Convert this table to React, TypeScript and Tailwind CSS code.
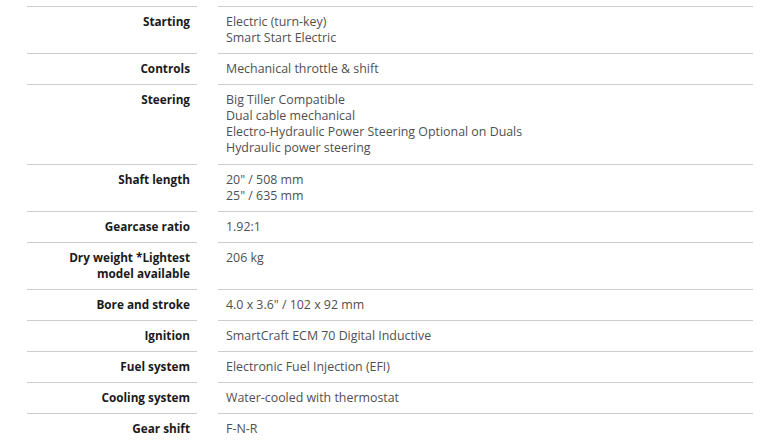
import React from "react";

const rows: [string[], string[]][] = [
  [["Starting"], ["Electric (turn-key)", "Smart Start Electric"]],
  [["Controls"], ["Mechanical throttle & shift"]],
  [["Steering"], ["Big Tiller Compatible", "Dual cable mechanical", "Electro-Hydraulic Power Steering Optional on Duals", "Hydraulic power steering"]],
  [["Shaft length"], ["20\" / 508 mm", "25\" / 635 mm"]],
  [["Gearcase ratio"], ["1.92:1"]],
  [["Dry weight *Lightest", "model available"], ["206 kg"]],
  [["Bore and stroke"], ["4.0 x 3.6\" / 102 x 92 mm"]],
  [["Ignition"], ["SmartCraft ECM 70 Digital Inductive"]],
  [["Fuel system"], ["Electronic Fuel Injection (EFI)"]],
  [["Cooling system"], ["Water-cooled with thermostat"]],
  [["Gear shift"], ["F-N-R"]],
];

export default function App() {
  return (
    <div className="w-[768px] h-[440px] overflow-hidden bg-white pt-[6px]" style={{ fontFamily: "'Open Sans', sans-serif" }}>
      <div className="ml-[27px] grid grid-cols-[170px_535px] gap-x-[21px]">
        {rows.map(([label, vals]) => (
          <React.Fragment key={label[0]}>
            <div className={`border-t border-[#cccccc] pt-[6px] pb-[8px] pr-[7px] text-right text-[11.75px] leading-[16px] font-bold text-[#1a1a1a] ${vals.length === 4 ? "min-h-[80px]" : ""}`}>
              {label.map((l) => (
                <div key={l}>{l}</div>
              ))}
            </div>
            <div className="border-t border-[#cccccc] pt-[7px] pb-[7px] pl-[8px] text-[12.4px] leading-[16px] font-normal text-[#505050]">
              {vals.map((v) => (
                <div key={v}>{v}</div>
              ))}
            </div>
          </React.Fragment>
        ))}
      </div>
    </div>
  );
}
